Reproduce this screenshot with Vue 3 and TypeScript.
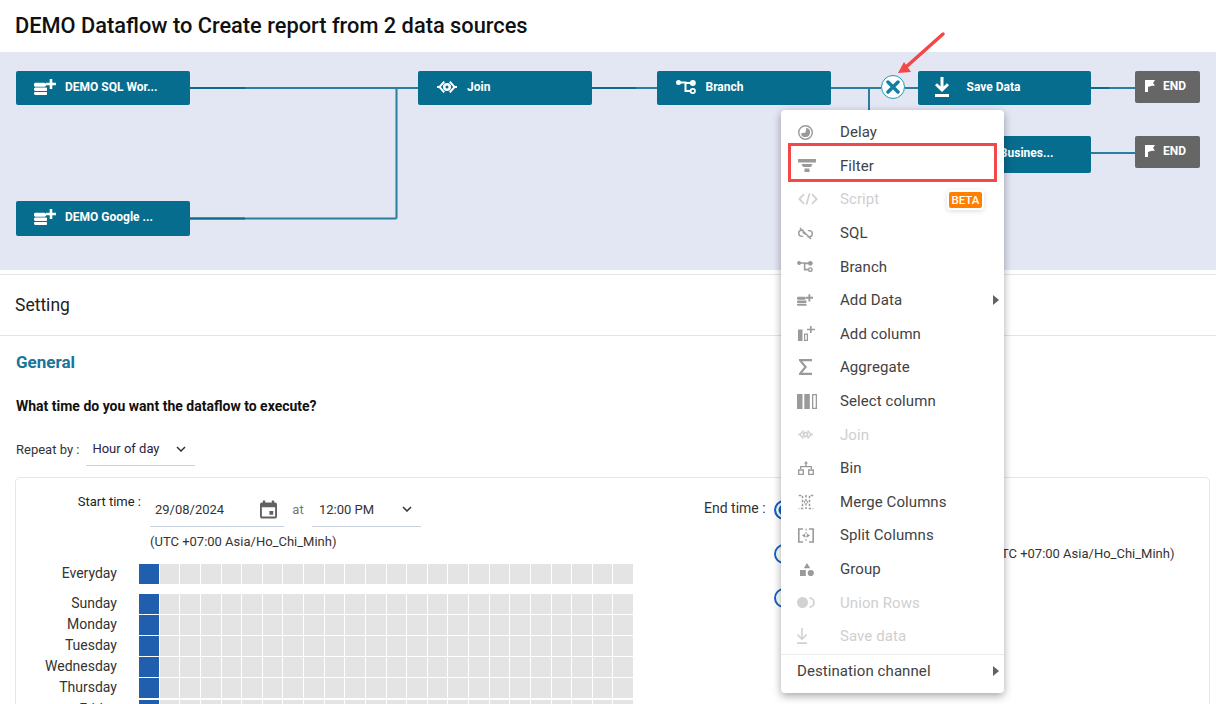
<template>
  <div class="page">
    <svg class="sprites" width="0" height="0">
      <defs>
        <symbol id="i-data" viewBox="0 0 22 16">
          <path d="M1 3.700h9.500l1.500 1v2l-1 1H1l-1-1v-2zM1 8.600h11.500l.5.500v2.400l-.5.500H1l-1-1V9.600zM1 13h11.500l.5.500v2l-.5.500H1l-1-1v-1.500z" />
          <path d="M15.700 0h2.600v3.700H22v2.600h-3.700V10h-2.600V6.300H12V3.700h3.700z" />
        </symbol>
        <symbol id="i-join" viewBox="0 0 20 12">
          <path fill-rule="evenodd" d="M10 2a4 4 0 1 1 0 8 4 4 0 0 1 0-8zm0 2.500a1.500 1.500 0 1 0 0 3 1.500 1.500 0 0 0 0-3z" />
          <path d="M0 5h2L6.500 0 8 1.300 3.800 6 8 10.700 6.500 12 2 7H0zM20 5h-2L13.500 0 12 1.300 16.200 6 12 10.700 13.500 12 18 7h2z" />
        </symbol>
        <symbol id="i-branch" viewBox="0 0 20 14">
          <circle cx="2.500" cy="2.500" r="2.500" />
          <circle cx="16.800" cy="3" r="3" />
          <path fill="none" stroke="currentColor" stroke-width="2" d="M4 2.500h5.500v8.500h5M9.500 3h5" />
          <circle cx="16.800" cy="11" r="2.200" fill="none" stroke="currentColor" stroke-width="1.800" />
        </symbol>
        <symbol id="i-save" viewBox="0 0 14 20">
          <path d="M5.500 0h3v9.500l3.500-3.300 2 2L7 15 0 8.200l2-2 3.500 3.300zM0 17h14v3H0z" />
        </symbol>
        <symbol id="i-flag" viewBox="0 0 10 12">
          <path d="M0 0h10L8 3l2 2.500-4 .5-3 1v5H0z" />
        </symbol>
        <symbol id="i-delay" viewBox="0 0 16 16">
          <path fill-rule="evenodd" d="M8 0a8 8 0 1 1 0 16A8 8 0 0 1 8 0zm0 1.500a6.500 6.500 0 1 0 0 13 6.500 6.500 0 0 0 0-13z" />
          <path d="M9 3a5 5 0 1 1-6 6l5-1z" />
        </symbol>
        <symbol id="i-filter" viewBox="0 0 18 13">
          <path d="M0 0h18v3.500H0zM3.500 5h11l-1.500 3H5zM6.500 9.500h5V13h-5z" />
        </symbol>
        <symbol id="i-script" viewBox="0 0 20 12">
          <path fill="none" stroke="currentColor" stroke-width="1.800" d="M6 1.200 1.300 6 6 10.800M14 1.200 18.700 6 14 10.800M11.500.5 8.500 11.500" />
        </symbol>
        <symbol id="i-sql" viewBox="0 0 16 14">
          <path fill="none" stroke="currentColor" stroke-width="1.500" d="M6 3.500H4a3.300 3.300 0 0 0 0 6.600h1.500M10 10.500h2a3.300 3.300 0 0 0 0-6.600h-1.500M5 5.500 8 8M2 1l12 12" />
        </symbol>
        <symbol id="i-column" viewBox="0 0 17 15">
          <path fill-rule="evenodd" d="M0 3.500h4.500V15H0zM6 7.500h4V15H6zM7.200 8.700v5.100h1.600V8.700zM12 0h1.600v2.700h3.400v1.600h-3.400V7H12V4.300H9V2.700h3z" />
        </symbol>
        <symbol id="i-sigma" viewBox="0 0 13 16">
          <path d="M0 0h13v2.200H3.200L8 8l-4.800 5.800H13V16H0v-1.800L5.200 8 0 1.800z" />
        </symbol>
        <symbol id="i-select" viewBox="0 0 20 15">
          <path fill-rule="evenodd" d="M0 0h5.500v15H0zM7.300 0h5.500v15H7.300zM15 0h5v15h-5zM16.300 1.300v12.400h2.400V1.300z" />
        </symbol>
        <symbol id="i-bin" viewBox="0 0 16 14">
          <path d="M8 0l2 2.500H8.700V5H14v3h-1.300V6.300H3.300V8H2V5h5.300V2.500H6z" />
          <path fill="none" stroke="currentColor" stroke-width="1.300" d="M.7 9h4.600v4.300H.7zM10.700 9h4.600v4.300h-4.600z" />
        </symbol>
        <symbol id="i-merge" viewBox="0 0 16 16">
          <path fill="none" stroke="currentColor" stroke-width="1.500" stroke-dasharray="2.500 1.500" d="M.7 1.500h3.800v13H.7M15.300 1.500h-3.800v13h3.800M8 1v14" />
          <path d="M5.500 8 7 6.500v3zM10.500 8 9 6.500v3z" />
        </symbol>
        <symbol id="i-split" viewBox="0 0 16 15">
          <path fill="none" stroke="currentColor" stroke-width="1.600" d="M5 1h-4.200v13H5M11 1h4.200v13H11" />
          <path fill="none" stroke="currentColor" stroke-width="1" stroke-dasharray="2 1.500" d="M8 .5v14" />
          <path d="M4 7.500 7 5.500v4zM12 7.500 9 5.500v4z" />
        </symbol>
        <symbol id="i-group" viewBox="0 0 14 13">
          <path d="M7 0l3.200 5.300H3.800zM0 7h5.800v6H0z" />
          <circle cx="10.800" cy="10" r="3.100" />
        </symbol>
        <symbol id="i-union" viewBox="0 0 19 11">
          <circle cx="5.500" cy="5.500" r="5.500" />
          <path fill="none" stroke="currentColor" stroke-width="1.800" d="M12.500 1a4.500 4.500 0 1 1 0 9" />
        </symbol>
        <symbol id="i-down" viewBox="0 0 10 16">
          <path d="M4.200 0h1.600v9.200L8.900 6.100 10 7.200 5 12.200 0 7.200l1.100-1.100 3.100 3.100zM0 14.200h10V16H0z" />
        </symbol>
      </defs>
    </svg>

    <h1 class="title">DEMO Dataflow to Create report from 2 data sources</h1>

    <section class="canvas">
      <svg class="edges" width="1216" height="218">
        <path d="M190 36H418M396.500 36V166.500M190 166.500H396.500M592 36H657M831 36H881M905 36H918M869 36V60M1091 36H1135M1091 101H1135" />
        <path class="dark" d="M190 36H245M190 166.500H245M592 36H636M1091 36H1109" />
      </svg>
      <div
        v-for="n in nodes"
        :key="n.label"
        class="node"
        :style="{ left: n.x + 'px', top: n.y + 'px', width: n.w + 'px', height: n.h + 'px' }"
      >
        <svg class="node-icon" :style="{ left: n.ix + 'px', top: n.iy + 'px', width: n.iw + 'px', height: n.ih + 'px' }">
          <use :href="'#' + n.icon" />
        </svg>
        <span class="node-label" :style="{ left: n.tx + 'px', top: (n.ty ?? 0) + 'px' }">{{ n.label }}</span>
      </div>
      <div v-for="y in [19, 84]" :key="y" class="end-node" :style="{ top: y + 'px' }">
        <svg width="10" height="12"><use href="#i-flag" /></svg>
        <span>END</span>
      </div>
      <div class="close-btn">
        <svg width="14" height="14" viewBox="0 0 14 14">
          <path d="M2 2l10 10M12 2 2 12" />
        </svg>
      </div>
    </section>

    <div class="setting-bar">Setting</div>

    <section class="general">
      <h2>General</h2>
      <p class="question">What time do you want the dataflow to execute?</p>
      <div class="repeat">
        <span>Repeat by :</span>
        <div class="select repeat-select">
          <span>Hour of day</span>
          <svg class="chev" width="10" height="6" viewBox="0 0 10 6"><path d="M1 1l4 4 4-4" /></svg>
        </div>
      </div>

      <div class="card">
        <div class="left-col">
          <div class="start-row">
            <span class="start-label">Start time :</span>
            <div class="start-fields">
              <div class="fields-line">
                <div class="select date-field">
                  <span>29/08/2024</span>
                  <svg width="17" height="19" viewBox="0 0 18 19">
                    <path fill="#616161" fill-rule="evenodd" d="M3 0h2.500v2h7V0H15v2h1a2 2 0 0 1 2 2v13a2 2 0 0 1-2 2H2a2 2 0 0 1-2-2V4a2 2 0 0 1 2-2h1zM2 7v10h14V7zM10 11h4v4h-4z" />
                  </svg>
                </div>
                <span class="at">at</span>
                <div class="select time-field">
                  <span>12:00 PM</span>
                  <svg class="chev" width="10" height="6" viewBox="0 0 10 6"><path d="M1 1l4 4 4-4" /></svg>
                </div>
              </div>
              <div class="tz">(UTC +07:00 Asia/Ho_Chi_Minh)</div>
            </div>
          </div>

          <div class="schedule">
            <div v-for="d in days" :key="d" class="day" :class="{ 'day-first': d === 'Everyday' }">
              <span class="day-name">{{ d }}</span>
              <div class="hours">
                <i v-for="h in 24" :key="h" :class="{ on: h === 1 }"></i>
              </div>
            </div>
          </div>
        </div>

        <div class="right-col">
          <span class="end-label">End time :</span>
          <div class="radios">
            <div class="radio checked"></div>
            <div class="radio-row">
              <div class="radio"></div>
              <span class="tz-right">(UTC +07:00 Asia/Ho_Chi_Minh)</span>
            </div>
            <div class="radio"></div>
          </div>
        </div>
      </div>
    </section>

    <div class="menu">
      <div
        v-for="m in menu"
        :key="m.label"
        class="menu-item"
        :class="{ disabled: m.disabled }"
      >
        <span class="menu-icon">
          <svg :width="m.w" :height="m.h" :style="{ marginLeft: (m.off ?? 0) + 'px' }"><use :href="'#' + m.icon" /></svg>
        </span>
        <span>{{ m.label }}</span>
        <span v-if="m.beta" class="beta">BETA</span>
        <span v-if="m.sub" class="caret"></span>
      </div>
      <div class="menu-foot">
        <span>Destination channel</span>
        <span class="caret"></span>
      </div>
    </div>

    <div class="highlight"></div>
    <svg class="arrow" width="60" height="60" viewBox="0 0 60 60">
      <path class="shaft" d="M47 5 10 38" />
      <path class="head" d="M2 44 8 33 15 43z" />
    </svg>
  </div>
</template>

<script setup lang="ts">
type FlowNode = {
  label: string
  icon: string
  x: number
  y: number
  w: number
  h: number
  ix: number
  iy: number
  iw: number
  ih: number
  tx: number
  ty?: number
}

type MenuItem = {
  label: string
  icon: string
  w: number
  h: number
  off?: number
  disabled?: boolean
  beta?: boolean
  sub?: boolean
}

const nodes: FlowNode[] = [
  { label: 'DEMO SQL Wor...', icon: 'i-data', x: 16, y: 19, w: 174, h: 34, ix: 18, iy: 8, iw: 22, ih: 16, tx: 49 },
  { label: 'DEMO Google ...', icon: 'i-data', x: 16, y: 149, w: 174, h: 35, ix: 18, iy: 8, iw: 22, ih: 16, tx: 49 },
  { label: 'Join', icon: 'i-join', x: 418, y: 19, w: 174, h: 34, ix: 19, iy: 10, iw: 20, ih: 12, tx: 49 },
  { label: 'Branch', icon: 'i-branch', x: 657, y: 19, w: 174, h: 34, ix: 19, iy: 9, iw: 20, ih: 14, tx: 48.500 },
  { label: 'Save Data', icon: 'i-save', x: 918, y: 19, w: 173, h: 34, ix: 17, iy: 6, iw: 14, ih: 20, tx: 48.500 },
  { label: 'Save to Busines...', icon: 'i-save', x: 918, y: 84, w: 173, h: 37, ix: 17, iy: 8, iw: 14, ih: 20, tx: 39, ty: 1 },
]

const days = ['Everyday', 'Sunday', 'Monday', 'Tuesday', 'Wednesday', 'Thursday', 'Friday']

const menu: MenuItem[] = [
  { label: 'Delay', icon: 'i-delay', w: 15, h: 15, off: 1 },
  { label: 'Filter', icon: 'i-filter', w: 18, h: 13, off: 1 },
  { label: 'Script', icon: 'i-script', w: 20, h: 12, off: 1, disabled: true, beta: true },
  { label: 'SQL', icon: 'i-sql', w: 15, h: 13, off: 1 },
  { label: 'Branch', icon: 'i-branch', w: 16, h: 11 },
  { label: 'Add Data', icon: 'i-data', w: 16, h: 12, sub: true },
  { label: 'Add column', icon: 'i-column', w: 17, h: 15, off: 1 },
  { label: 'Aggregate', icon: 'i-sigma', w: 13, h: 16, off: 2 },
  { label: 'Select column', icon: 'i-select', w: 20, h: 15 },
  { label: 'Join', icon: 'i-join', w: 15, h: 9, off: 1, disabled: true },
  { label: 'Bin', icon: 'i-bin', w: 16, h: 14, off: 1 },
  { label: 'Merge Columns', icon: 'i-merge', w: 16, h: 16, off: 1 },
  { label: 'Split Columns', icon: 'i-split', w: 16, h: 15, off: 1 },
  { label: 'Group', icon: 'i-group', w: 14, h: 13, off: 3 },
  { label: 'Union Rows', icon: 'i-union', w: 19, h: 11, disabled: true },
  { label: 'Save data', icon: 'i-down', w: 10, h: 16, disabled: true },
]
</script>

<style>
html,
body {
  overflow: hidden;
  background: #fff;
}
</style>

<style scoped>
.page {
  position: relative;
  width: 1216px;
  height: 704px;
  overflow: hidden;
  font-family: Roboto, "Liberation Sans", sans-serif;
  font-size: 14px;
  color: #333;
  background: #fff;
}
.sprites {
  position: absolute;
}
svg {
  fill: currentColor;
  display: block;
}
.title {
  height: 52px;
  margin: 0;
  padding-left: 15px;
  font-size: 21.800px;
  font-weight: 500;
  line-height: 52px;
  color: #111;
}

/* flow canvas */
.canvas {
  position: relative;
  height: 218px;
  background: #e3e6f3;
}
.edges {
  position: absolute;
  left: 0;
  top: 0;
}
.edges path {
  fill: none;
  stroke: #2a7f9f;
  stroke-width: 2;
}
.edges path.dark {
  stroke: #0c6a8b;
}
.node {
  position: absolute;
  border-radius: 2px;
  background: #076d8e;
  color: #fff;
}
.node-icon {
  position: absolute;
}
.node-label {
  position: absolute;
  line-height: 32px;
  font-size: 12px;
  font-weight: 700;
  white-space: nowrap;
}
.end-node {
  position: absolute;
  left: 1135px;
  display: flex;
  align-items: center;
  gap: 8px;
  box-sizing: border-box;
  width: 65px;
  height: 32px;
  padding: 0 0 2px 10px;
  border-radius: 2px;
  background: #666;
  color: #fff;
  font-size: 12px;
  font-weight: 700;
}
.close-btn {
  position: absolute;
  left: 881px;
  top: 23px;
  display: flex;
  align-items: center;
  justify-content: center;
  box-sizing: border-box;
  width: 24px;
  height: 24px;
  border: 1.500px solid #2196b8;
  border-radius: 50%;
  background: #fff;
}
.close-btn path {
  fill: none;
  stroke: #0f7fa3;
  stroke-width: 3.500;
  stroke-linecap: round;
}

/* settings */
.setting-bar {
  height: 60px;
  margin-top: 4px;
  padding-left: 15px;
  border-top: 1px solid #e3e4ea;
  border-bottom: 1px solid #e3e4ea;
  font-size: 17.500px;
  line-height: 61px;
  color: #222;
}
.general {
  padding: 0 6px 0 15px;
}
.general h2 {
  margin: 16px 0 0 1px;
  font-size: 17px;
  font-weight: 700;
  line-height: 20px;
  color: #17769a;
}
.question {
  margin: 24px 0 0 1px;
  font-size: 14px;
  font-weight: 700;
  line-height: 20px;
  color: #111;
}
.repeat {
  display: flex;
  align-items: center;
  gap: 7px;
  height: 38px;
  margin: 14px 0 0 1px;
  font-size: 13px;
}
.select {
  display: flex;
  align-items: center;
  justify-content: space-between;
  box-sizing: border-box;
  border-bottom: 1px solid #c9d3e0;
}
.repeat-select {
  width: 109px;
  height: 33px;
  padding: 0 9px 0 6px;
  font-size: 13px;
  color: #2b2140;
}
.chev path {
  fill: none;
  stroke: #333;
  stroke-width: 1.500;
}
.card {
  display: flex;
  box-sizing: border-box;
  height: 300px;
  margin-top: 9px;
  border: 1px solid #e3e8ea;
  border-radius: 5px;
}
.left-col {
  width: 687px;
}
.start-row {
  display: flex;
  padding-top: 14px;
}
.start-label {
  width: 125px;
  margin-right: 9px;
  font-size: 13px;
  line-height: 20px;
  text-align: right;
  color: #222;
}
.fields-line {
  display: flex;
  align-items: center;
}
.date-field {
  width: 134px;
  height: 35px;
  padding: 0 7px 0 5px;
  font-size: 13px;
}
.at {
  width: 28px;
  text-align: center;
  font-size: 13px;
  color: #777;
}
.time-field {
  width: 109px;
  height: 35px;
  padding: 0 9px 0 7px;
  font-size: 13px;
}
.tz {
  margin-top: 5px;
  font-size: 13px;
  line-height: 20px;
  color: #333;
}
.schedule {
  margin-top: 12px;
}
.day {
  display: flex;
  align-items: stretch;
  height: 21px;
}
.day-first {
  height: 30px;
}
.day:nth-child(6) {
  height: 22px;
}
.day-name {
  width: 101px;
  text-align: right;
  font-size: 14px;
  line-height: 19px;
  color: #333;
}
.hours {
  display: grid;
  grid-template-columns: repeat(24, 1fr);
  gap: 1px;
  width: 494px;
  height: 19.500px;
  margin-left: 22px;
}
.hours i {
  background: #e4e4e4;
}
.hours i.on {
  background: #1f5fad;
}
.right-col {
  position: relative;
  display: flex;
  flex: 1;
  padding-top: 20px;
}
.end-label {
  width: 70px;
  margin-left: 1px;
  font-size: 14px;
  line-height: 20px;
  color: #333;
}
.radios {
  display: flex;
  flex-direction: column;
  gap: 24px;
  padding-top: 2px;
}
.radio {
  box-sizing: border-box;
  width: 20px;
  height: 20px;
  border: 2px solid #1565c0;
  border-radius: 50%;
}
.radio.checked {
  background: #1565c0;
  box-shadow: inset 0 0 0 2.500px #fff;
}
.radio-row {
  display: flex;
  align-items: center;
}
.tz-right {
  margin: -2px 0 0 194px;
  font-size: 13px;
  white-space: nowrap;
}

/* add-step menu */
.menu {
  position: absolute;
  left: 781px;
  top: 110px;
  box-sizing: border-box;
  width: 223px;
  height: 583px;
  padding-top: 5.500px;
  border-radius: 4px;
  background: #fff;
  box-shadow: 0 3px 8px rgba(0, 0, 0, 0.35);
}
.menu-item {
  position: relative;
  display: flex;
  align-items: center;
  height: 33.600px;
  font-size: 15px;
  letter-spacing: 0.08px;
  color: #424242;
}
.menu-item.disabled {
  color: #cfcfcf;
}
.menu-icon {
  display: flex;
  align-items: center;
  width: 24px;
  margin: 0 19px 0 16px;
  color: #9a9a9a;
}
.menu-item.disabled .menu-icon {
  color: #d2d2d2;
}
.beta {
  position: absolute;
  left: 168px;
  top: 9px;
  width: 33px;
  border-radius: 2px;
  background: #ff7f00;
  box-shadow: 0 0 0 2px #fff, 0 1px 5px 2px rgba(0, 0, 0, 0.15);
  font-size: 11.500px;
  font-weight: 500;
  line-height: 16px;
  letter-spacing: 0;
  text-align: center;
  color: #fff;
}
.caret {
  position: absolute;
  right: 5px;
  top: 50%;
  margin-top: -5px;
  border-left: 6px solid #616161;
  border-top: 5px solid transparent;
  border-bottom: 5px solid transparent;
}
.menu-foot {
  position: relative;
  height: 33px;
  margin-top: 0.500px;
  padding-left: 16px;
  border-top: 1px solid #ececec;
  font-size: 15px;
  letter-spacing: 0.08px;
  line-height: 32px;
  color: #424242;
}
.highlight {
  position: absolute;
  left: 788px;
  top: 143px;
  box-sizing: border-box;
  width: 209px;
  height: 39px;
  border: 3px solid #f44848;
}
.arrow {
  position: absolute;
  left: 896px;
  top: 29px;
}
.arrow .shaft {
  fill: none;
  stroke: #f44848;
  stroke-width: 3.500;
  stroke-linecap: round;
}
.arrow .head {
  fill: #f44848;
}
</style>
